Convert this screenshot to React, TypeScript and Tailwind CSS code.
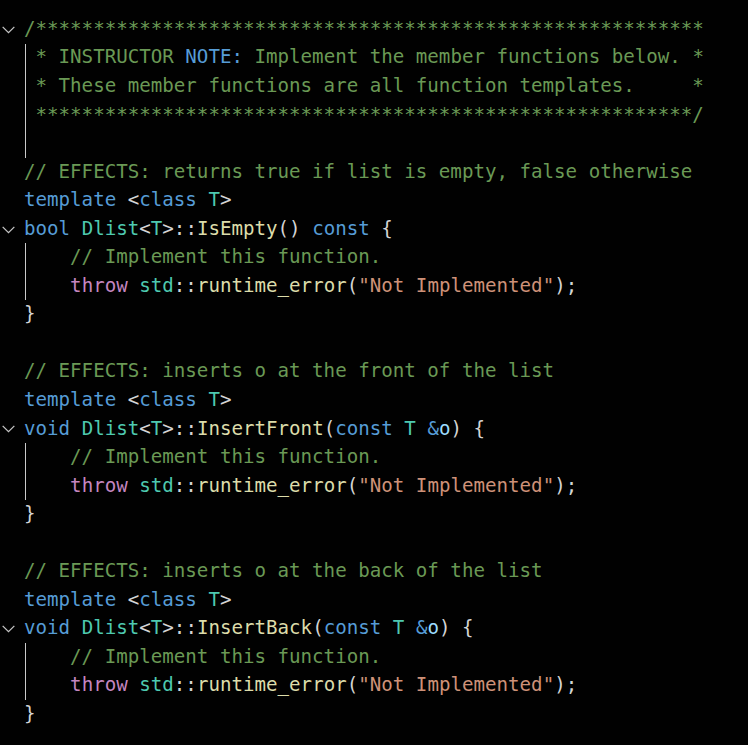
import React from "react";

// token colours (VS Code Dark+)
const C = {
  cm: "text-[#6a9955]",
  kw: "text-[#569cd6]",
  ty: "text-[#4ec9b0]",
  fn: "text-[#dcdcaa]",
  ctl: "text-[#c586c0]",
  str: "text-[#ce9178]",
  pr: "text-[#9cdcfe]",
  pu: "text-[#d4d4d4]",
};

type Tok = [string, string];
type Line = { toks: Tok[]; fold?: boolean };

const stars = (n: number) => "*".repeat(n);

const Chevron = () => (
  <svg width="17" height="17" viewBox="0 0 16 16" className="text-[#c5c5c5]">
    <path d="M2.5 5.5l5.5 5.5 5.5-5.5" fill="none" stroke="currentColor" strokeWidth="1.2" />
  </svg>
);

const Row = ({ line }: { line: Line }) => (
  <div className="flex h-[28.55px] items-center">
    <div className="flex w-[24px] shrink-0 items-center justify-start">
      {line.fold && <Chevron />}
    </div>
    <div className="whitespace-pre">
      {line.toks.map(([cls, text], i) => (
        <span key={i} className={cls}>
          {text}
        </span>
      ))}
    </div>
  </div>
);

// a block of lines with an indent guide on its left
const Guided = ({ lines }: { lines: Line[] }) => (
  <div className="relative">
    <span className="absolute left-[25px] top-0 bottom-0 w-[1px] bg-[#c9c9c9]" />
    {lines.map((l, i) => (
      <Row key={i} line={l} />
    ))}
  </div>
);

const empty: Line = { toks: [] };
const close: Line = { toks: [[C.pu, "}"]] };
const tmpl: Line = {
  toks: [
    [C.kw, "template"],
    [C.pu, " <"],
    [C.kw, "class"],
    [C.pu, " "],
    [C.ty, "T"],
    [C.pu, ">"],
  ],
};
const body: Line[] = [
  { toks: [[C.cm, "    // Implement this function."]] },
  {
    toks: [
      [C.pu, "    "],
      [C.ctl, "throw"],
      [C.pu, " "],
      [C.ty, "std"],
      [C.pu, "::"],
      [C.fn, "runtime_error"],
      [C.pu, "("],
      [C.str, '"Not Implemented"'],
      [C.pu, ");"],
    ],
  },
];

const sig = (ret: string, name: string, params: boolean, isConst: boolean): Line => ({
  fold: true,
  toks: [
    [C.kw, ret],
    [C.pu, " "],
    [C.ty, "Dlist"],
    [C.pu, "<"],
    [C.ty, "T"],
    [C.pu, ">::"],
    [C.fn, name],
    [C.pu, "("],
    ...(params
      ? ([
          [C.kw, "const"],
          [C.pu, " "],
          [C.ty, "T"],
          [C.pu, " "],
          [C.kw, "&"],
          [C.pr, "o"],
        ] as Tok[])
      : []),
    [C.pu, ")"],
    ...(isConst ? ([[C.pu, " "], [C.kw, "const"]] as Tok[]) : []),
    [C.pu, " {"],
  ],
});

const App = () => {
  return (
    <div
      className="h-[745px] w-[748px] overflow-hidden bg-[#010101] pt-[15px] text-[19.15px] text-[#d4d4d4]"
      style={{ fontFamily: '"DejaVu Sans Mono", "Liberation Mono", monospace' }}
    >
      <Row line={{ fold: true, toks: [[C.cm, "/" + stars(58)]] }} />
      <Guided
        lines={[
          {
            toks: [
              [C.cm, " * INSTRUCTOR "],
              [C.kw, "NOTE:"],
              [C.cm, " Implement the member functions below. *"],
            ],
          },
          { toks: [[C.cm, " * These member functions are all function templates.     *"]] },
          { toks: [[C.cm, " " + stars(57) + "/"]] },
          empty,
        ]}
      />

      <Row line={{ toks: [[C.cm, "// EFFECTS: returns true if list is empty, false otherwise"]] }} />
      <Row line={tmpl} />
      <Row line={sig("bool", "IsEmpty", false, true)} />
      <Guided lines={body} />
      <Row line={close} />
      <Row line={empty} />

      <Row line={{ toks: [[C.cm, "// EFFECTS: inserts o at the front of the list"]] }} />
      <Row line={tmpl} />
      <Row line={sig("void", "InsertFront", true, false)} />
      <Guided lines={body} />
      <Row line={close} />
      <Row line={empty} />

      <Row line={{ toks: [[C.cm, "// EFFECTS: inserts o at the back of the list"]] }} />
      <Row line={tmpl} />
      <Row line={sig("void", "InsertBack", true, false)} />
      <Guided lines={body} />
      <Row line={close} />
    </div>
  );
};

export default App;
